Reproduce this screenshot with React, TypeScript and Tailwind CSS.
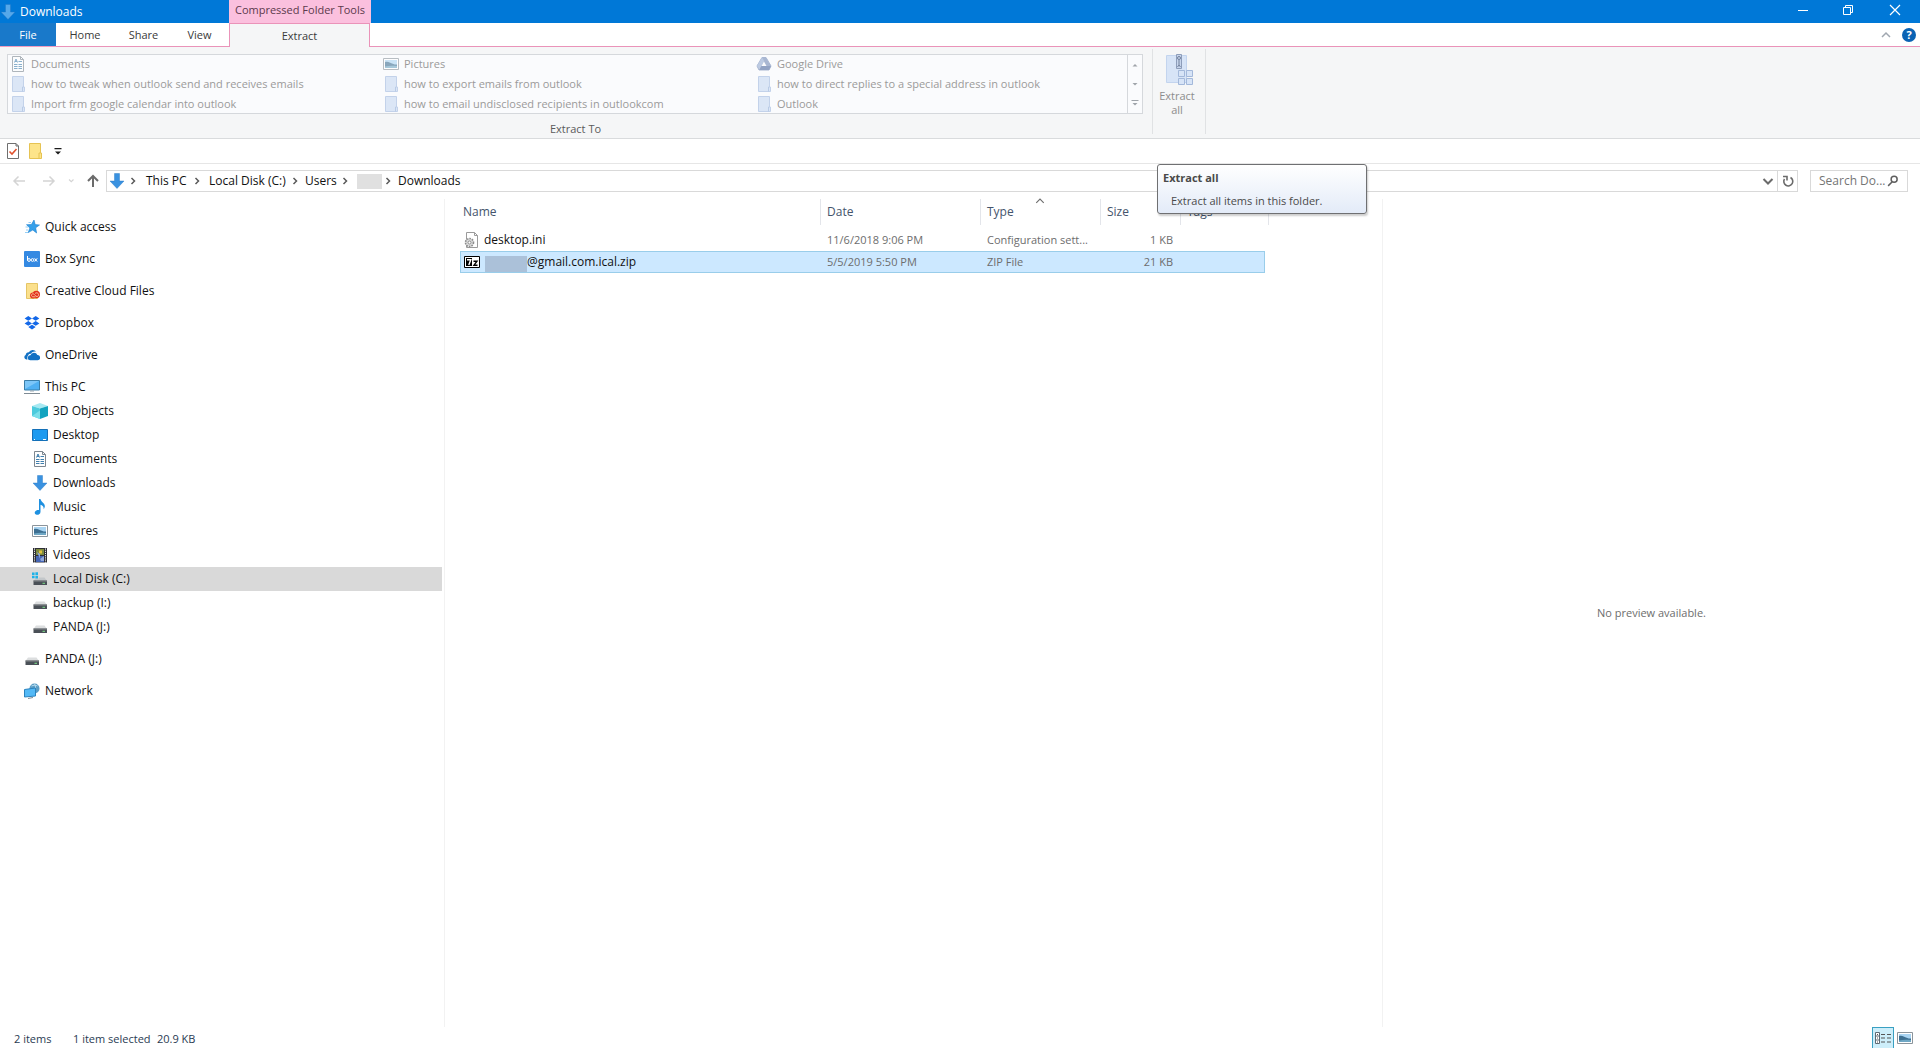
import React from "react";

type IconProps = { className?: string };

const DownArrow = ({ className = "text-[#3a92e0]" }: IconProps) => (
  <svg className={`size-4 shrink-0 ${className}`} viewBox="0 0 16 16">
    <path d="M5.500.500h5V8H15L8 15.500 1 8h4.500z" fill="currentColor" stroke="#1f74c4" strokeOpacity=".5" strokeWidth=".8" />
  </svg>
);

const DocIcon = ({ className = "" }: IconProps) => (
  <svg className={`size-4 shrink-0 ${className}`} viewBox="0 0 16 16">
    <path d="M2.500.500h8l3 3v12h-11z" fill="#fdfdfd" stroke="#7d8790" />
    <path d="M10.500.500v3h3" fill="none" stroke="#7d8790" />
    <path d="M8.500 5.500H12M4 8.500h3.500M8.500 8.500H12M4 10.500h3.500M8.500 10.500H12M4 12.500h3.500M8.500 12.500H12" stroke="#3f7fae" />
    <path d="M4.500 6.500 6 3l1.500 3.500M5 5.500h2" fill="none" stroke="#3f7fae" />
  </svg>
);

const PaleFolder = () => (
  <svg className="size-4 shrink-0" viewBox="0 0 16 16">
    <path d="M2.500.500h11V11h1v4.500h-12z" fill="#dbe6f6" stroke="#c3d2ea" />
    <path d="M12.500 15.500V11h1" fill="none" stroke="#b9cbe6" />
  </svg>
);

const YellowFolder = () => (
  <svg className="size-4 shrink-0" viewBox="0 0 16 16">
    <path d="M2.500.500h11V10h1v5.500h-12z" fill="#fde48a" stroke="#e6c353" />
    <path d="M12 15.500V10h1.500" fill="none" stroke="#e6c353" />
  </svg>
);

const PictureIcon = ({ className = "" }: IconProps) => (
  <svg className={`size-4 shrink-0 ${className}`} viewBox="0 0 16 16">
    <path d="M.500 2.500h15v11H.500z" fill="#fff" stroke="#8b949b" />
    <path d="M2 4h12v8H2z" fill="#a9d4f2" />
    <path d="M2 6c3-1 5 .500 7 1.500s3.500 1 5 1V12H2z" fill="#3d6f91" />
    <path d="M2 10.500c4-1 8-1 12-.500V12H2z" fill="#6fa7c4" />
  </svg>
);

const DriveIcon = () => (
  <svg className="size-4 shrink-0" viewBox="0 0 16 16">
    <path d="M6 1.500h4l5 8.500-2 4H3l-2-4z" fill="#a9b7d2" stroke="#a9b7d2" strokeLinejoin="round" />
    <path d="M6 1.500 8.200 5 3.500 13.500 1 10z" fill="#bccae2" />
    <path d="M5.500 10h9.500l-2 4H3.300z" fill="#92a3c4" />
    <path d="M8 5.600 10.500 10h-5z" fill="#fafbfd" />
  </svg>
);

const StarIcon = () => (
  <svg className="size-4 shrink-0" viewBox="0 0 16 16">
    <path d="M10 1l1.200 4.600 4.300.400-3.800 2.800.900 5.200-3.800-3-4.600 2.600 1.700-4.700L2.500 5.700l4.900-.200z" fill="#35a0ea" stroke="#1b7fd0" strokeWidth=".6" />
    <path d="M4.500 3.500h2.500M1.500 8h3M2 11h2M1 13.500h3" stroke="#7cc3f2" strokeWidth=".8" />
  </svg>
);

const BoxIcon = () => (
  <svg className="size-4 shrink-0" viewBox="0 0 16 16">
    <rect width="16" height="16" rx="1" fill="#3489e2" />
    <g fill="none" stroke="#fff" strokeWidth="1">
      <path d="M3.500 5v4.500" />
      <circle cx="5" cy="9" r="1.400" />
      <circle cx="8.500" cy="9" r="1.400" />
      <path d="M10.600 7.300l2.600 3.300M13.200 7.300l-2.600 3.300" />
    </g>
  </svg>
);

const CreativeCloudIcon = () => (
  <svg className="size-4 shrink-0" viewBox="0 0 16 16">
    <path d="M2.500.500h11v15h-11z" fill="#fbe08c" stroke="#e5c566" />
    <circle cx="9" cy="12.500" r="3" fill="#e3321c" />
    <circle cx="12.300" cy="11.500" r="3.700" fill="#e3321c" />
    <path d="M11.500 13.800H9a1.500 1.500 0 1 1 1-2.600l2 2c1.500 1 2.700-.300 2.600-1.600a2 2 0 0 0-3.600-1" fill="none" stroke="#fbd9b0" strokeWidth=".8" />
  </svg>
);

const DropboxIcon = () => (
  <svg className="size-4 shrink-0" viewBox="0 0 16 16" fill="#1368e8">
    <path d="M4.300 1 8 3.400 4.300 5.800.600 3.400zM11.700 1l3.700 2.400-3.700 2.400L8 3.400zM4.300 6l3.700 2.400-3.700 2.400L.600 8.400zM11.700 6l3.700 2.400-3.700 2.400L8 8.400zM8 9.700l3.700 2.400L8 14.500l-3.700-2.400z" />
  </svg>
);

const OneDriveIcon = () => (
  <svg className="size-4 shrink-0" viewBox="0 0 16 16" fill="#1271c4">
    <path d="M3.500 12.500H2.200A2.400 2.400 0 0 1 1.700 8 3.200 3.200 0 0 1 4.800 5.200 4.400 4.400 0 0 1 12.300 4.800C9.500 4 7.500 5.400 7 6.800 4.500 6.400 2.700 9.500 3.500 12.500z" />
    <path d="M6.200 13.300a2.500 2.500 0 0 1 .2-5 3.700 3.700 0 0 1 7-.2 2.600 2.600 0 0 1 .300 5.200z" />
  </svg>
);

const PcIcon = () => (
  <svg className="size-4 shrink-0" viewBox="0 0 16 16">
    <path d="M.500 1.500h15v9.500H.500z" fill="#4fb0f2" stroke="#3b7ea8" />
    <path d="M1 2h14L1 10z" fill="#7cc6f8" />
    <path d="M6 12h4" stroke="#9aa7b0" />
    <path d="M0 14.500h16" stroke="#7f8b94" />
  </svg>
);

const CubeIcon = () => (
  <svg className="size-4 shrink-0" viewBox="0 0 16 16">
    <path d="M8 0l8 3-8 2.500L0 3z" fill="#a7e9f2" />
    <path d="M0 3l8 2.500V16l-8-3z" fill="#4ccbdd" />
    <path d="M16 3 8 5.500V16l8-3z" fill="#12a3bf" />
    <path d="M0 13l8-5.500V16z" fill="#7adfea" />
  </svg>
);

const DesktopIcon = () => (
  <svg className="size-4 shrink-0" viewBox="0 0 16 16">
    <path d="M.500 2.500h15v11H.500z" fill="#1c9af0" stroke="#1470b8" />
    <path d="M2 12.500h1M11 12.500h3" stroke="#fff" />
  </svg>
);

const MusicIcon = () => (
  <svg className="size-4 shrink-0" viewBox="0 0 16 16" fill="#1e90e0">
    <path d="M7 0h1.500c.3 3 4.800 4 4.300 7.500-.1 1.200-.6 2.200-1.300 2.800.7-2.500-1-4-3-4.600v7C8.500 15 6.500 16 4.800 15.800 3 15.500 2.300 14 3 12.700 3.800 11.200 5.500 10.700 7 11z" />
  </svg>
);

const VideoIcon = () => (
  <svg className="size-4 shrink-0" viewBox="0 0 16 16">
    <path d="M1 1h14v14.500H1z" fill="#2e2f36" />
    <path d="M2.500 1.500v14M13.500 1.500v14" stroke="#f2f2f2" strokeDasharray="1.200 1" />
    <path d="M4 2h8v6H4z" fill="#7c8a3f" />
    <path d="M4 9h8v6H4z" fill="#4565b4" />
    <path d="M7 3.500h3v3H7z" fill="#e0c13c" />
    <path d="M5 5l3 2v5l4-3v5H9z" fill="#8ea6dc" />
  </svg>
);

const DiskIcon = ({ windows = false }: { windows?: boolean }) => (
  <svg className="size-4 shrink-0" viewBox="0 0 16 16">
    <path d="M4 6.500h8.500L15 10H1.500z" fill={windows ? "#c3c7ca" : "#dcdedf"} />
    <path d="M1.500 9.500H15V14H1.500z" fill="#4a5057" />
    <path d="M1.500 9.500H15v1H1.500z" fill="#84898d" />
    <path d="M10.500 12.300h2.500" stroke="#7ee08a" />
    {windows && (
      <g>
        <path d="M0 0h7v7.500H0z" fill="#d9d9d9" />
        <path d="M0 1.500h2.600V4H0zM3.400 1.200H6V4H3.400zM0 4.700h2.600v2.500H0zM3.400 4.700H6v2.800H3.400z" fill="#1fb2e8" />
      </g>
    )}
  </svg>
);

const NetworkIcon = () => (
  <svg className="size-4 shrink-0" viewBox="0 0 16 16">
    <circle cx="10.500" cy="5.500" r="5" fill="#5a9cc4" />
    <path d="M7.500 3c2-1 4.500-1 6 0M10.500.800c1.500 3 1.500 6 0 9" stroke="#b8dcef" fill="none" />
    <path d="M.500 6.500 11.500 5v8L.500 14z" fill="#53b9f6" stroke="#2b82bd" />
    <path d="M4 15.500l5-1" stroke="#7f8b94" />
  </svg>
);

const IniIcon = () => (
  <svg className="size-4 shrink-0" viewBox="0 0 16 16">
    <path d="M2.500.500h8l3 3v12h-11z" fill="#fff" stroke="#9b9b9b" />
    <path d="M10.500.500v3h3" fill="none" stroke="#9b9b9b" />
    <circle cx="5.500" cy="10.500" r="4" fill="#dcdcdc" stroke="#8d8d8d" strokeDasharray="1.600 1" strokeWidth="1.600" />
    <circle cx="5.500" cy="10.500" r="1.500" fill="#fff" stroke="#8d8d8d" />
  </svg>
);

const SevenZipIcon = () => (
  <svg className="size-4 shrink-0" viewBox="0 0 16 16">
    <path d="M.500 2.500h15v11H.500z" fill="#fff" stroke="#000" />
    <path d="M2 4h6v8H2z" fill="#000" />
    <path d="M3 5.800h3.800L4.800 11" fill="none" stroke="#fff" strokeWidth="1.400" />
    <path d="M9.500 7.200h3.500L10 11.200h3.500" fill="none" stroke="#000" strokeWidth="1.400" />
  </svg>
);

const CheckDocIcon = () => (
  <svg className="size-4 shrink-0" viewBox="0 0 16 16">
    <path d="M2.500.500h8.500l2.500 2.500v12.500h-11z" fill="#fff" stroke="#6f6f6f" />
    <path d="M11 .500V3h2.500" fill="none" stroke="#6f6f6f" />
    <path d="M4.500 8.500 7 11l4.500-5" fill="none" stroke="#e0512d" strokeWidth="1.600" />
  </svg>
);

const ExtractAllIcon = () => (
  <svg className="h-8 w-8" viewBox="0 0 32 32">
    <path d="M3.500 1.500h20v27h-20z" fill="#d7e4f7" stroke="#c3d4ee" />
    <path d="M13.500.500h5v14h-5z" fill="#c7d5ec" stroke="#8d9dba" />
    <circle cx="16" cy="4" r="1.500" fill="none" stroke="#71809c" />
    <path d="M16 6v5M14.500 13l1.500-2 1.500 2" fill="none" stroke="#71809c" />
    <g fill="#d7e4f7" stroke="#a3b8da">
      <path d="M15.500 16.500h6v6h-6zM23.500 16.500h6v6h-6zM15.500 24.500h6v6h-6zM23.500 24.500h6v6h-6z" />
    </g>
  </svg>
);

const Stroke = ({ d, className = "", w = 1.5 }: { d: string; className?: string; w?: number }) => (
  <svg className={`shrink-0 ${className}`} viewBox="0 0 16 16" fill="none" stroke="currentColor" strokeWidth={w}>
    <path d={d} />
  </svg>
);

const Crumb = () => <Stroke d="M6.500 5 9.500 8 6.500 11" className="size-4 text-[#5a5a5a]" w={1.5} />;

const gallery = [
  { label: "Documents", icon: <DocIcon className="opacity-60" /> },
  { label: "Pictures", icon: <PictureIcon className="opacity-60" /> },
  { label: "Google Drive", icon: <DriveIcon /> },
  { label: "how to tweak when outlook send and receives emails", icon: <PaleFolder /> },
  { label: "how to export emails from outlook", icon: <PaleFolder /> },
  { label: "how to direct replies to a special address in outlook", icon: <PaleFolder /> },
  { label: "Import frm google calendar into outlook", icon: <PaleFolder /> },
  { label: "how to email undisclosed recipients in outlookcom", icon: <PaleFolder /> },
  { label: "Outlook", icon: <PaleFolder /> },
];

type NavItem = { label: string; icon: React.ReactNode; selected?: boolean; children?: NavItem[] };

const navItems: NavItem[] = [
  { label: "Quick access", icon: <StarIcon /> },
  { label: "Box Sync", icon: <BoxIcon /> },
  { label: "Creative Cloud Files", icon: <CreativeCloudIcon /> },
  { label: "Dropbox", icon: <DropboxIcon /> },
  { label: "OneDrive", icon: <OneDriveIcon /> },
  {
    label: "This PC",
    icon: <PcIcon />,
    children: [
      { label: "3D Objects", icon: <CubeIcon /> },
      { label: "Desktop", icon: <DesktopIcon /> },
      { label: "Documents", icon: <DocIcon /> },
      { label: "Downloads", icon: <DownArrow /> },
      { label: "Music", icon: <MusicIcon /> },
      { label: "Pictures", icon: <PictureIcon /> },
      { label: "Videos", icon: <VideoIcon /> },
      { label: "Local Disk (C:)", icon: <DiskIcon windows />, selected: true },
      { label: "backup (I:)", icon: <DiskIcon /> },
      { label: "PANDA (J:)", icon: <DiskIcon /> },
    ],
  },
  { label: "PANDA (J:)", icon: <DiskIcon /> },
  { label: "Network", icon: <NetworkIcon /> },
];

function TitleBar() {
  return (
    <header className="flex h-[23px] shrink-0 bg-[#0078d7]">
      <div className="flex w-[229px] items-center gap-1 text-white">
        <DownArrow className="text-[#55a8ea]" />
        <h1>Downloads</h1>
      </div>
      <div className="flex w-[142px] items-center justify-center bg-[#fbc0de] pb-1 text-[11px] text-[#5c3a4c]">
        Compressed Folder Tools
      </div>
      <div className="ml-auto flex items-center pb-1 text-white">
        <button aria-label="Minimize" className="flex w-[46px] justify-center">
          <Stroke d="M3 8.500h10" className="size-4" w={1} />
        </button>
        <button aria-label="Restore" className="flex w-11 justify-center">
          <Stroke d="M3.500 5.500h7v7h-7zM5.500 5.500v-2h7v7h-2" className="size-4" w={1} />
        </button>
        <button aria-label="Close" className="flex w-[50px] justify-center">
          <Stroke d="M3 3l10 10M13 3 3 13" className="size-4" w={1.2} />
        </button>
      </div>
    </header>
  );
}

function Tabs() {
  return (
    <div className="flex h-6 shrink-0 text-[11px] text-[#3a3a3a]">
      <button className="w-14 border-b border-[#f19cc0] bg-[#1979ca] text-white">File</button>
      <div className="flex w-[173px] border-b border-[#ea93b9]">
        <button className="w-[58px]">Home</button>
        <button className="w-[59px]">Share</button>
        <button className="w-[53px]">View</button>
      </div>
      <button className="w-[141px] border-x border-t border-[#ea93b9] bg-[#f5f6f7]">Extract</button>
      <div className="flex flex-1 items-center justify-end gap-2 border-b border-[#ea93b9] pr-1">
        <button aria-label="Minimize the Ribbon">
          <Stroke d="M4 10l4-4 4 4" className="size-4 text-[#a0a7b0]" />
        </button>
        <button aria-label="Help" className="flex size-[14px] items-center justify-center rounded-full bg-[#0a63b4] text-[11px] font-bold text-white">
          ?
        </button>
      </div>
    </div>
  );
}

function Ribbon() {
  return (
    <section className="flex shrink-0 border-b border-[#d9dbdd] bg-[#f5f6f7] pt-0.5 pb-1 text-[11px] text-[#9a9a9a]">
      <div className="w-[1152px] pl-[7px] pt-[5px]">
        <div className="flex h-[60px] w-[1136px] border border-[#d5d8dc] bg-[#fafbfd]">
          <ul className="-mt-px grid flex-1 grid-cols-3">
            {gallery.map((g) => (
              <li key={g.label} className="flex h-5 items-center">
                <button className="flex items-center gap-[5px] pl-0.5">
                  {g.icon}
                  <span className="whitespace-nowrap">{g.label}</span>
                </button>
              </li>
            ))}
          </ul>
          <div className="flex w-[15px] flex-col items-center justify-around border-l border-[#d5d8dc]">
            <button aria-label="Scroll up" className="block">
              <svg className="h-2 w-2" viewBox="0 0 8 8"><path d="M1.500 5.500h5L4 3z" fill="#9fa4aa" /></svg>
            </button>
            <button aria-label="Scroll down" className="block">
              <svg className="h-2 w-2" viewBox="0 0 8 8"><path d="M1.500 3h5L4 5.500z" fill="#9fa4aa" /></svg>
            </button>
            <button aria-label="More" className="block">
              <svg className="h-2 w-2" viewBox="0 0 8 8"><path d="M.500 1h7v1h-7zM1.500 4h5L4 6.500z" fill="#9fa4aa" /></svg>
            </button>
          </div>
        </div>
        <div className="pr-2 pt-[9px] text-center leading-[11px] text-[#5a5a5a]">Extract To</div>
      </div>
      <div className="relative w-[54px] border-x border-[#e0e2e4]">
        <button className="flex w-full flex-col items-center pt-[5px] leading-[14px] text-[#8d8d8d]">
          <ExtractAllIcon />
          <span className="mt-[3px] flex flex-col pr-1">
            <span>Extract</span>
            <span>all</span>
          </span>
        </button>
        <div role="tooltip" className="absolute left-1 top-[115px] z-10 w-[210px] rounded-[3px] border border-[#6f7072] bg-gradient-to-b from-white to-[#e3ebf8] pb-1 pl-[5px] pt-1 text-[#4a4a4a] shadow-[1px_2px_2px_rgba(0,0,0,0.2)]">
          <div className="h-5 font-bold leading-[18px]">Extract all</div>
          <div className="h-5 pl-2 pt-1 leading-4">Extract all items in this folder.</div>
        </div>
      </div>
    </section>
  );
}

function QuickBar() {
  return (
    <div className="flex h-[25px] shrink-0 items-center border-b border-[#e6e6e6] pl-[5px]">
      <button aria-label="Properties"><CheckDocIcon /></button>
      <button aria-label="New folder" className="ml-1.5"><YellowFolder /></button>
      <button aria-label="Customize Quick Access Toolbar" className="ml-[7px]">
        <svg className="size-4" viewBox="0 0 16 16"><path d="M4.500 5h7v1.300h-7zM5 8.500h6L8 11.500z" fill="#1b1b1b" /></svg>
      </button>
    </div>
  );
}

function AddressRow() {
  return (
    <div className="flex h-[35px] shrink-0 items-center pb-px pr-3">
      <div className="flex w-[106px] items-center pl-[11px]">
        <button aria-label="Back" className="text-[#d4d4d4]"><Stroke d="M14 8H3M7.500 3.500 3 8l4.500 4.500" className="size-4" /></button>
        <button aria-label="Forward" className="ml-[14px] text-[#d4d4d4]"><Stroke d="M2 8h11M8.500 3.500 13 8l-4.500 4.500" className="size-4" /></button>
        <button aria-label="Recent locations" className="ml-[9px] text-[#d4d4d4]"><Stroke d="M4 6l3 3 3-3" className="size-3" /></button>
        <button aria-label="Up" className="ml-[7px] text-[#6b6b6b]"><Stroke d="M8 14V3M3 8l5-5 5 5" className="size-4" w={2} /></button>
      </div>
      <div className="flex h-[22px] flex-1 border border-[#d9d9d9] text-[#111]">
        <nav aria-label="Address" className="flex flex-1 items-center pl-0.5">
          <DownArrow />
          <Crumb />
          <button className="ml-[5px] w-[43px] whitespace-nowrap text-left">This PC</button>
          <Crumb />
          <button className="ml-1 w-[78px] whitespace-nowrap text-left">Local Disk (C:)</button>
          <Crumb />
          <button className="ml-0.5 w-8 whitespace-nowrap text-left">Users</button>
          <Crumb />
          <span className="ml-1 h-[15px] w-[25px] bg-[#e0e0e0]" />
          <span className="-ml-0.5 flex"><Crumb /></span>
          <button className="ml-0.5">Downloads</button>
        </nav>
        <button aria-label="Previous locations" className="pr-px text-[#6b6b6b]"><Stroke d="M3.500 6 8 10.500 12.500 6" className="size-4" w={2} /></button>
        <button aria-label="Refresh" className="flex w-5 items-center justify-center border-l border-[#d9d9d9] text-[#6b6b6b]">
          <Stroke d="M4.500 6A4.500 4.500 0 1 0 10.500 4.500M3 3.500h4v4" className="size-4" w={1.6} />
        </button>
      </div>
      <label className="ml-3 flex h-[22px] w-[98px] items-center border border-[#d9d9d9] pl-2 pr-2">
        <input type="text" aria-label="Search Downloads" placeholder="Search Do..." className="w-0 flex-1 placeholder-[#757575] outline-none" />
        <Stroke d="M1.500 14.500 7 9M13.500 5.500a4 4 0 1 1-8 0 4 4 0 0 1 8 0z" className="size-3 text-[#5f5f5f]" w={2} />
      </label>
    </div>
  );
}

function NavRow({ item, child = false }: { item: NavItem; child?: boolean }) {
  const pad = child ? "pl-8" : "pl-6";
  const bg = item.selected ? "bg-[#d9d9d9]" : "";
  return (
    <li>
      <button className={`flex h-6 w-full items-center gap-[5px] text-left ${pad} ${bg}`}>
        {item.icon}
        {item.label}
      </button>
      {item.children && (
        <ul>
          {item.children.map((c) => (
            <NavRow key={c.label} item={c} child />
          ))}
        </ul>
      )}
    </li>
  );
}

const headers = ["Name", "Date", "Type", "Size", "Tags"];

function FileTable() {
  const cell = "h-[22px] whitespace-nowrap p-0 pl-1.5 text-[11px]";
  return (
    <table className="ml-[15px] w-[805px] table-fixed border-collapse text-[#6d6d6d]">
      <colgroup>
        <col className="w-[361px]" />
        <col className="w-40" />
        <col className="w-[120px]" />
        <col className="w-20" />
        <col className="w-[84px]" />
      </colgroup>
      <thead>
        <tr>
          {headers.map((h, i) => (
            <th key={h} className="p-0 pb-1 text-left font-normal text-[#44546c]">
              <div className={`relative h-[26px] border-r border-[#e3e5ea] leading-[26px] ${i === 0 ? "pl-[3px]" : "pl-1.5"} ${i === 4 ? "-mr-1" : ""}`}>
                {h}
                {h === "Type" && <Stroke d="M3 10.500l5-5 5 5" className="absolute left-[53px] top-[-4px] size-3 text-[#6d6d6d]" />}
              </div>
            </th>
          ))}
        </tr>
      </thead>
      <tbody>
        <tr>
          <td className="h-[22px] p-0 pl-1">
            <div className="flex items-center gap-1 text-[#111]"><IniIcon />desktop.ini</div>
          </td>
          <td className={cell}>11/6/2018 9:06 PM</td>
          <td className={cell}>Configuration sett...</td>
          <td className={`${cell} pr-2 text-right`}>1 KB</td>
          <td className={cell} />
        </tr>
        <tr className="bg-[#cce8ff] outline outline-1 -outline-offset-1 outline-[#99cdea]">
          <td className="h-[22px] p-0 pl-1">
            <div className="flex h-[22px] items-center text-[#111]">
              <SevenZipIcon />
              <span className="ml-[5px] mt-1 h-[17px] w-[42px] bg-[#abc1d9]" />
              @gmail.com.ical.zip
            </div>
          </td>
          <td className={cell}>5/5/2019 5:50 PM</td>
          <td className={cell}>ZIP File</td>
          <td className={`${cell} pr-2 text-right`}>21 KB</td>
          <td className={cell} />
        </tr>
      </tbody>
    </table>
  );
}

function StatusBar() {
  return (
    <footer className="flex h-[21px] shrink-0 items-center pl-[14px] pr-[7px] text-[11px] text-[#2a3b52]">
      <span className="w-[59px] pt-0.5">2 items</span>
      <span className="w-[84px] whitespace-nowrap pt-0.5">1 item selected</span>
      <span className="pt-0.5">20.9 KB</span>
      <button aria-label="Details view" className="ml-auto flex h-full w-[22px] items-center justify-center border border-b-0 border-[#3aa0c2] bg-[#cdeefa]">
        <svg className="h-4 w-[18px]" viewBox="0 0 18 16" fill="none" stroke="#5d6b75">
          <path d="M1.500 2.500h4v11h-4zM1.500 6h4M1.500 10h4" fill="#fff" />
          <path d="M3 4.500h1M3 8h1M3 12h1M7 4.500h4M13 4.500h4M7 8h4M13 8h4M7 12h4M13 12h4" stroke="#555" />
        </svg>
      </button>
      <button aria-label="Large icons view" className="ml-[3px]"><PictureIcon /></button>
    </footer>
  );
}

export default function App() {
  return (
    <div className="flex h-screen flex-col overflow-hidden bg-white font-['Open_Sans','Noto_Sans',sans-serif] text-[12px] leading-4 text-[#111]">
      <TitleBar />
      <Tabs />
      <Ribbon />
      <QuickBar />
      <AddressRow />
      <div className="flex min-h-0 flex-1">
        <aside className="w-[442px] shrink-0 pt-4">
          <ul className="flex flex-col gap-2">
            {navItems.map((n) => (
              <NavRow key={n.label} item={n} />
            ))}
          </ul>
        </aside>
        <main className="ml-0.5 min-w-0 flex-1 border-l border-[#f2f2f2]">
          <FileTable />
        </main>
        <section aria-label="Preview" className="flex w-[538px] shrink-0 items-center justify-center border-l border-[#f2f2f2] text-[11px] text-[#6d6d6d]">
          No preview available.
        </section>
      </div>
      <StatusBar />
    </div>
  );
}
